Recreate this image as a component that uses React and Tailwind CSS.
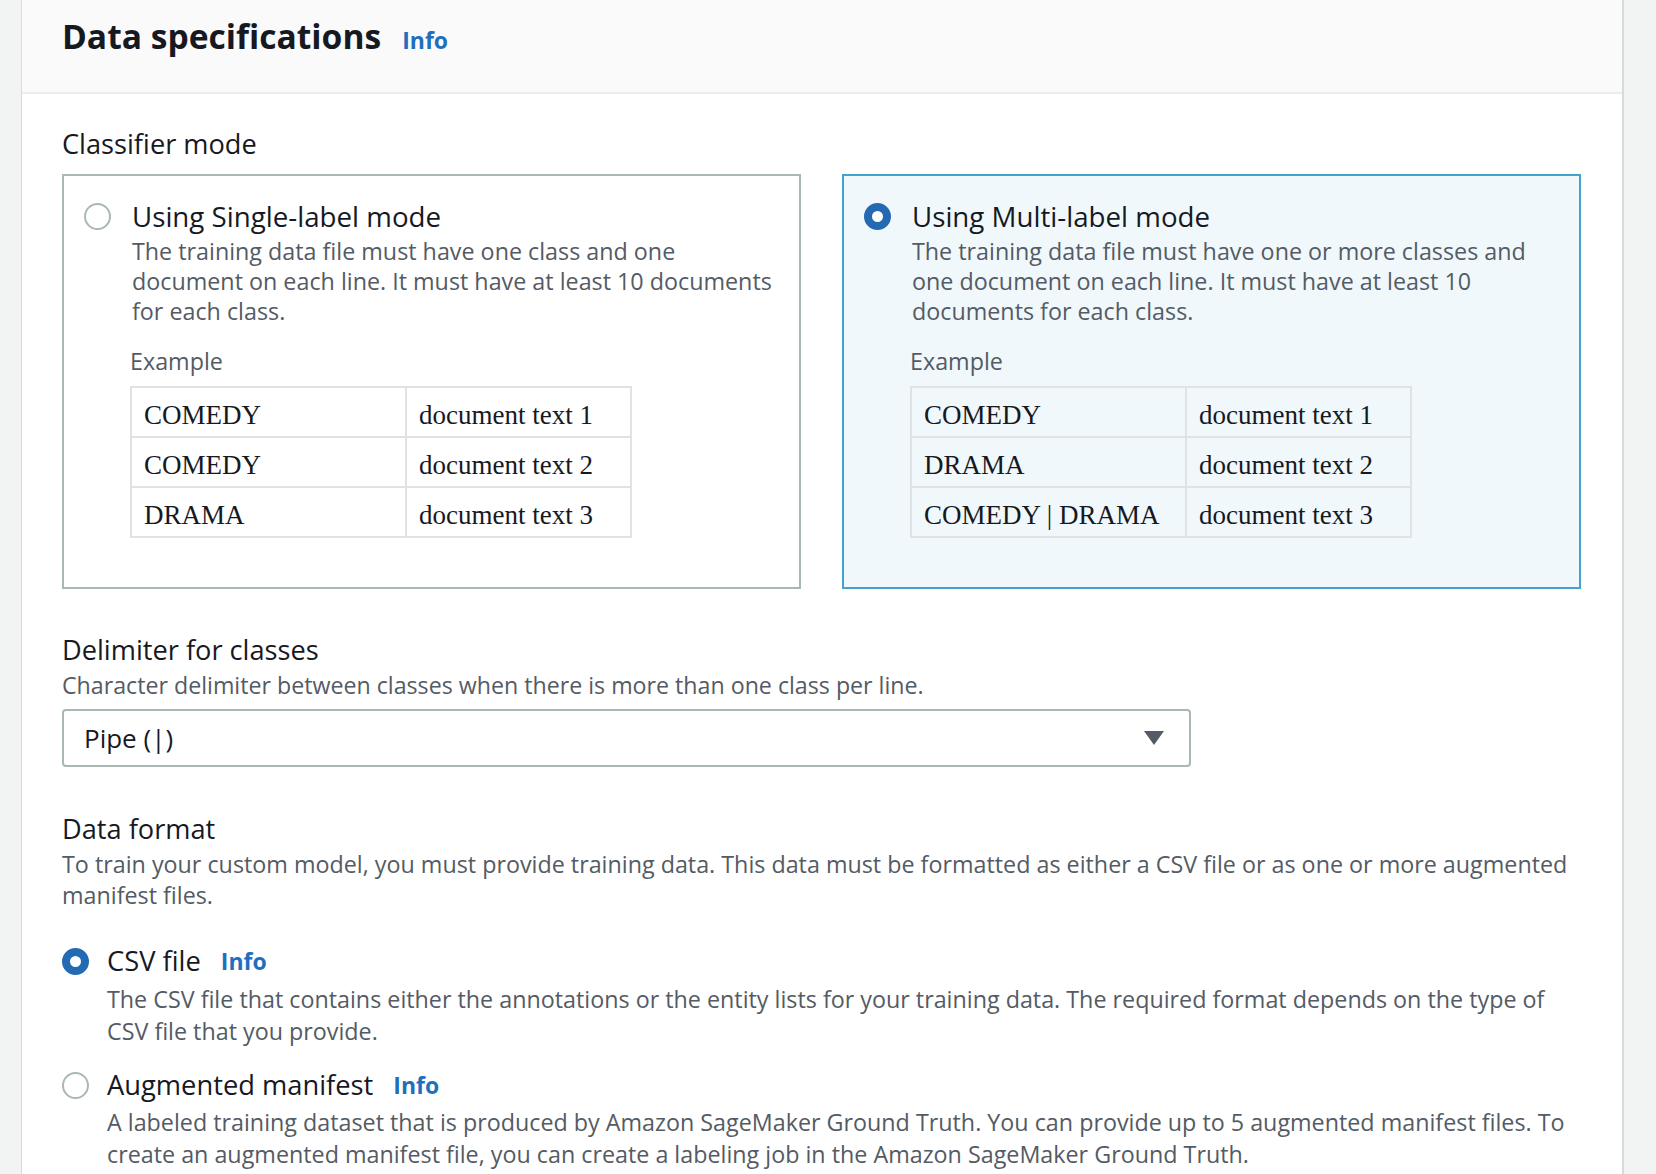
const modes = [
  {
    selected: false,
    title: 'Using Single-label mode',
    desc: 'The training data file must have one class and one document on each line. It must have at least 10 documents for each class.',
    rows: [
      ['COMEDY', 'document text 1'],
      ['COMEDY', 'document text 2'],
      ['DRAMA', 'document text 3'],
    ],
  },
  {
    selected: true,
    title: 'Using Multi-label mode',
    desc: 'The training data file must have one or more classes and one document on each line. It must have at least 10 documents for each class.',
    rows: [
      ['COMEDY', 'document text 1'],
      ['DRAMA', 'document text 2'],
      ['COMEDY | DRAMA', 'document text 3'],
    ],
  },
]

function Radio({ checked }) {
  if (checked) {
    return <span className="block w-[27px] h-[27px] rounded-full border-[8px] border-[#2469b3] bg-white shrink-0" />
  }
  return <span className="block w-[27px] h-[27px] rounded-full border-2 border-[#aab7b8] bg-white shrink-0" />
}

function InfoLink() {
  return <span className="text-[23px] font-bold text-[#1f6fbd]">Info</span>
}

function ModeCard({ selected, title, desc, rows }) {
  return (
    <div
      className={`border-2 pt-[22px] pl-[20px] pr-[20px] pb-[49px] ${
        selected ? 'border-[#44a3c9] bg-[#f0f8fc]' : 'border-[#aab7b8] bg-white'
      }`}
    >
      <div className="flex items-center gap-[21px] h-[36px]">
        <Radio checked={selected} />
        <span className="text-[27.7px] leading-[36px] text-[#16191f]">{title}</span>
      </div>
      <div className="pl-[48px]">
        <p className="mt-[2px] text-[23.3px] leading-[30px] text-[#545b64]">{desc}</p>
        <p className="mt-[20px] -ml-[2px] text-[23.3px] leading-[30px] text-[#545b64]">Example</p>
        <table className="mt-[10px] -ml-[2px] border-collapse font-['Liberation_Serif',serif] text-[27px] text-[#16191f]">
          <tbody>
            {rows.map((r, i) => (
              <tr key={i}>
                <td className="w-[275px] h-[50px] border-2 border-[#dfe3e3] pl-[12px] pt-[6px] whitespace-nowrap">{r[0]}</td>
                <td className="w-[225px] h-[50px] border-2 border-[#dfe3e3] pl-[12px] pt-[6px] whitespace-nowrap">{r[1]}</td>
              </tr>
            ))}
          </tbody>
        </table>
      </div>
    </div>
  )
}

export default function App() {
  return (
    <div className="flex h-[1174px] overflow-hidden bg-[#f2f3f3] font-['Open_Sans','Liberation_Sans',sans-serif]">
      <div className="w-[21px] shrink-0" />
      <div className="w-[1603px] shrink-0 bg-white border-l border-r-2 border-[#d5dbdb]">
        <div className="h-[94px] bg-[#fafafa] border-b-2 border-[#eaeded] px-[40px] pt-[16px] flex items-baseline gap-[21px]">
          <h2 className="text-[33.6px] leading-[40px] font-bold text-[#16191f]">Data specifications</h2>
          <InfoLink />
        </div>

        <div className="pl-[40px] pr-[41px] pt-[33px]">
          <div className="text-[27.2px] leading-[34px] text-[#16191f]">Classifier mode</div>
          <div className="mt-[13px] grid grid-cols-2 gap-[41px]">
            {modes.map((m) => (
              <ModeCard key={m.title} {...m} />
            ))}
          </div>

          <div className="mt-[44px] text-[27.2px] leading-[34px] text-[#16191f]">Delimiter for classes</div>
          <p className="mt-[3px] text-[23.2px] leading-[30px] text-[#545b64]">
            Character delimiter between classes when there is more than one class per line.
          </p>
          <div className="mt-[9px] w-[1129px] h-[58px] border-2 border-[#aab7b8] rounded-[4px] pl-[20px] pr-[25px] flex items-center justify-between">
            <span className="text-[26px] text-[#16191f]">Pipe (|)</span>
            <svg width="20" height="14" viewBox="0 0 20 14">
              <polygon points="0,0 20,0 10,14" fill="#545b64" />
            </svg>
          </div>

          <div className="mt-[45px] text-[27.2px] leading-[34px] text-[#16191f]">Data format</div>
          <p className="mt-[3px] text-[23.3px] leading-[31px] text-[#545b64]">
            To train your custom model, you must provide training data. This data must be formatted as either a CSV file or as one or more augmented manifest files.
          </p>

          <div className="mt-[33px] flex items-center gap-[18px] h-[34px]">
            <Radio checked />
            <span className="text-[27.3px] leading-[34px] text-[#16191f]">CSV file</span>
            <span className="ml-[2px]"><InfoLink /></span>
          </div>
          <p className="mt-[5px] pl-[45px] text-[23.3px] leading-[32px] text-[#545b64]">
            The CSV file that contains either the annotations or the entity lists for your training data. The required format depends on the type of CSV file that you provide.
          </p>

          <div className="mt-[21px] flex items-center gap-[18px] h-[34px]">
            <Radio checked={false} />
            <span className="text-[27.3px] leading-[34px] text-[#16191f]">Augmented manifest</span>
            <span className="ml-[2px]"><InfoLink /></span>
          </div>
          <p className="mt-[4px] pl-[45px] text-[23.3px] leading-[32px] text-[#545b64]">
            A labeled training dataset that is produced by Amazon SageMaker Ground Truth. You can provide up to 5 augmented manifest files. To create an augmented manifest file, you can create a labeling job in the Amazon SageMaker Ground Truth.
          </p>
        </div>
      </div>
      <div className="flex-1" />
    </div>
  )
}
